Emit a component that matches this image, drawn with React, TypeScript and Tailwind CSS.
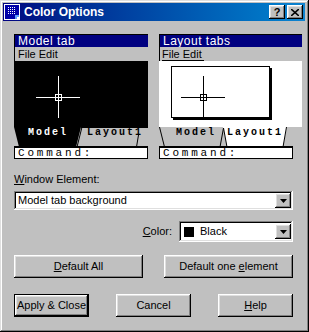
import React from 'react'

const raised = 'shadow-[inset_-1px_-1px_#000,inset_1px_1px_#fff,inset_-2px_-2px_#808080,inset_2px_2px_#dfdfdf]'
const sunken = 'shadow-[inset_-1px_-1px_#fff,inset_1px_1px_#808080,inset_-2px_-2px_#dfdfdf,inset_2px_2px_#000]'

function TitleIcon() {
  const dots = []
  for (let r = 0; r < 4; r++) for (let c = 0; c < 4; c++) dots.push(<rect key={r + '-' + c} x={4 + c * 2} y={3 + r * 2} width="1" height="1" fill="#fff" />)
  return (
    <svg width="16" height="16" viewBox="0 0 16 16">
      <rect x="0.5" y="0.5" width="15" height="15" fill="#0000a8" stroke="#fff" />
      {dots}
      <rect x="11" y="11" width="4" height="4" fill="#5fa0ff" />
      <rect x="13" y="13" width="3" height="3" fill="#fff" />
    </svg>
  )
}

function CapButton({ children }: { children: React.ReactNode }) {
  return (
    <div className={`w-[16px] h-[14px] bg-[#c0c0c0] ${raised} flex items-center justify-center text-[11px] font-bold leading-none text-black`}>
      {children}
    </div>
  )
}

function Crosshair({ color }: { color: string }) {
  return (
    <>
      <line x1="22" y1="36.5" x2="66" y2="36.5" stroke={color} />
      <line x1="44.5" y1="15" x2="44.5" y2="57" stroke={color} />
      <rect x="41.5" y="33.5" width="6" height="6" fill="none" stroke={color} />
    </>
  )
}

const tabText = "absolute top-[1px] font-['Liberation_Mono',monospace] font-bold text-[10px] leading-[10px] tracking-[2px]"
const cmdText = "font-['Liberation_Mono',monospace] text-[11px] leading-[10px] tracking-[2.8px] text-black"
const headText = 'h-[13px] bg-[#000080] text-white text-[12px] leading-[13px] tracking-[0.5px] pl-[3px] border-l border-t border-black'
const menuText = 'h-[14px] bg-[#c0c0c0] text-black text-[11px] leading-[14px] border-l border-black'

function ModelPreview() {
  return (
    <div className="w-[134px] flex flex-col">
      <div className={headText}>Model tab</div>
      <div className={`${menuText} pl-[3px]`}>File Edit</div>
      <div className="h-[66px] bg-black">
        <svg width="134" height="66">
          <Crosshair color="#fff" />
        </svg>
      </div>
      <div className="relative h-[20px]">
        <svg width="134" height="20" className="absolute left-0 top-0">
          <rect x="0" y="0" width="134" height="20" fill="#c0c0c0" />
          <polygon points="0,0 67,0 62,20 5,20" fill="#000" />
          <line x1="67" y1="0.5" x2="134" y2="0.5" stroke="#000" />
          <line x1="63" y1="20" x2="68" y2="0" stroke="#000" />
          <line x1="122.5" y1="20" x2="124.5" y2="8" stroke="#000" />
          <line x1="0" y1="19.5" x2="134" y2="19.5" stroke="#000" />
        </svg>
        <span className={`${tabText} left-[14px] text-white`}>Model</span>
        <span className={`${tabText} left-[73px] text-black`}>Layout1</span>
      </div>
      <div className="h-[12px] bg-white border border-black pl-[3px] flex items-center">
        <span className={cmdText}>Command:</span>
      </div>
    </div>
  )
}

function LayoutPreview() {
  return (
    <div className="w-[143px] flex flex-col">
      <div className={headText}>Layout tabs</div>
      <div className={`${menuText} pl-[2px]`}>
        <span className="inline-block h-[14px] border-b border-black pr-[2px]">File Edit</span>
      </div>
      <div className="h-[66px] bg-white">
        <svg width="143" height="66">
          <rect x="14" y="7" width="99" height="52" fill="#000" />
          <rect x="12.5" y="5.5" width="98" height="51" fill="#fff" stroke="#000" />
          <Crosshair color="#000" />
        </svg>
      </div>
      <div className="relative h-[20px] w-[134px]">
        <svg width="134" height="20" className="absolute left-0 top-0">
          <rect x="0" y="0" width="134" height="20" fill="#c0c0c0" />
          <polygon points="64,0 128,0 124,20 68,20" fill="#fff" />
          <line x1="0.5" y1="0" x2="5.5" y2="20" stroke="#000" />
          <line x1="61" y1="20" x2="64.5" y2="1" stroke="#000" />
          <line x1="64.5" y1="1" x2="68" y2="20" stroke="#000" />
          <line x1="124" y1="20" x2="127.5" y2="0" stroke="#000" />
          <line x1="0" y1="19.5" x2="134" y2="19.5" stroke="#000" />
        </svg>
        <span className={`${tabText} left-[17px] text-black`}>Model</span>
        <span className={`${tabText} left-[68px] text-black`}>Layout1</span>
      </div>
      <div className="h-[12px] w-[134px] bg-white border border-black pl-[3px] flex items-center">
        <span className={cmdText}>Command:</span>
      </div>
    </div>
  )
}

function DropArrow() {
  return (
    <div className={`w-[16px] h-[15px] bg-[#c0c0c0] ${raised} flex items-center justify-center`}>
      <svg width="7" height="4" viewBox="0 0 7 4">
        <polygon points="0,0 7,0 3.5,4" fill="#000" />
      </svg>
    </div>
  )
}

function Button({ children, width, isDefault }: { children: React.ReactNode; width: string; isDefault?: boolean }) {
  return (
    <div className={`${width} h-[23px] ${isDefault ? 'border border-black' : ''}`}>
      <div className={`w-full h-full bg-[#c0c0c0] ${raised} flex items-center justify-center text-[11px] text-black`}>
        <span>{children}</span>
      </div>
    </div>
  )
}

export default function App() {
  return (
    <div className="w-[309px] h-[332px] bg-[#c0c0c0] font-['Liberation_Sans',Arial,sans-serif] shadow-[inset_-1px_-1px_#000,inset_1px_1px_#dfdfdf,inset_-2px_-2px_#808080,inset_2px_2px_#fff] p-[3px] flex flex-col">
      {/* title bar */}
      <div className="h-[18px] w-[302px] bg-gradient-to-r from-[#000080] to-[#1084d0] flex items-center pl-[1px] pr-[2px]">
        <TitleIcon />
        <span className="ml-[4px] text-white font-bold text-[12px] leading-none">Color Options</span>
        <div className="ml-auto flex gap-[2px]">
          <CapButton>?</CapButton>
          <CapButton>
            <svg width="8" height="7" viewBox="0 0 8 7">
              <path d="M0 0 L8 7 M8 0 L0 7" stroke="#000" strokeWidth="1.6" />
            </svg>
          </CapButton>
        </div>
      </div>

      <div className="pl-[11px] flex flex-col">
        <div className="mt-[13px] flex gap-[11px]">
          <ModelPreview />
          <LayoutPreview />
        </div>

        <div className="mt-[14px] text-[11px] leading-[13px] text-black">
          <span className="underline">W</span>indow Element:
        </div>
        <div className={`mt-[5px] w-[279px] h-[19px] bg-white ${sunken} flex items-center pl-[4px] pr-[2px]`}>
          <span className="text-[11px] text-black flex-1">Model tab background</span>
          <DropArrow />
        </div>

        <div className="mt-[11px] flex items-center justify-end w-[279px]">
          <span className="text-[11px] text-black mr-[7px]">
            <span className="underline">C</span>olor:
          </span>
          <div className={`w-[114px] h-[21px] bg-white ${sunken} flex items-center pl-[5px] pr-[2px]`}>
            <div className="w-[10px] h-[10px] bg-black" />
            <span className="ml-[6px] text-[11px] text-black flex-1">Black</span>
            <DropArrow />
          </div>
        </div>

        <div className="mt-[13px] flex justify-between w-[279px]">
          <Button width="w-[129px]">
            <span className="underline">D</span>efault All
          </Button>
          <Button width="w-[129px]">
            Default one <span className="underline">e</span>lement
          </Button>
        </div>

        <div className="mt-[16px] flex justify-between w-[279px]">
          <Button width="w-[75px]" isDefault>Apply &amp; Close</Button>
          <Button width="w-[75px]">Cancel</Button>
          <Button width="w-[75px]">
            <span className="underline">H</span>elp
          </Button>
        </div>
      </div>
    </div>
  )
}
